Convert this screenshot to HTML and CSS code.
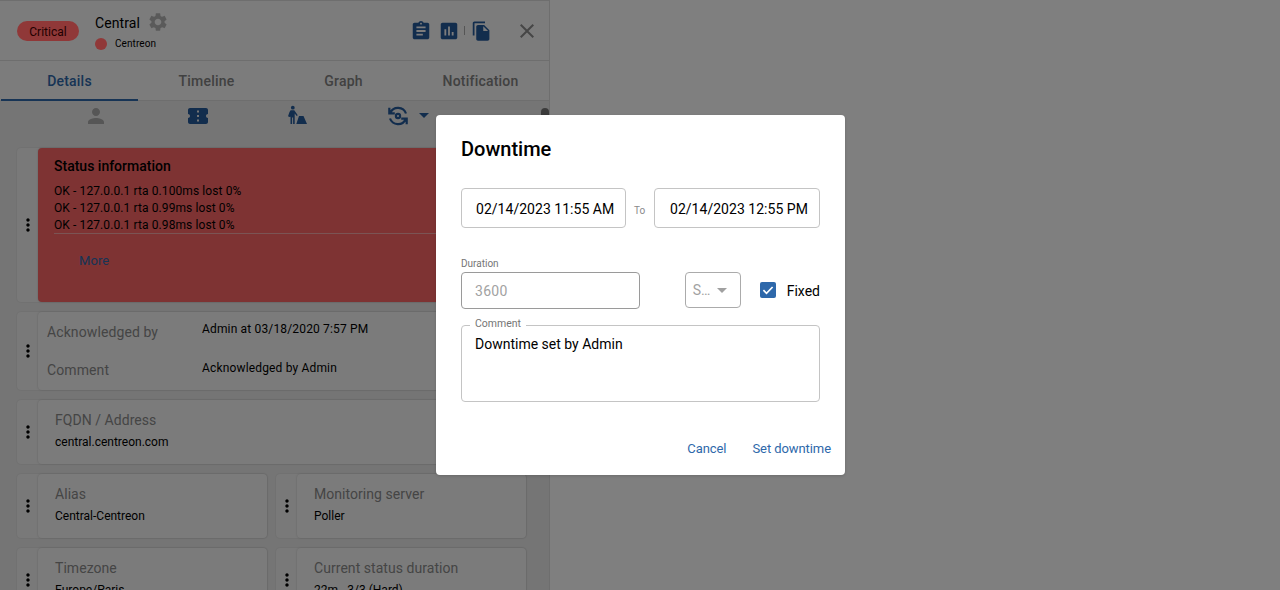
FILE: index.html
```html
<!DOCTYPE html>
<html>
<head>
<meta charset="utf-8">
<title>Downtime</title>
<link rel="stylesheet" href="styles.css">
</head>
<body>

<svg class="defs" width="0" height="0">
  <symbol id="dots" viewBox="0 0 24 24"><path d="M12 8c1.1 0 2-.9 2-2s-.9-2-2-2-2 .9-2 2 .9 2 2 2zm0 2c-1.1 0-2 .9-2 2s.9 2 2 2 2-.9 2-2-.9-2-2-2zm0 6c-1.1 0-2 .9-2 2s.9 2 2 2 2-.9 2-2-.9-2-2-2z"/></symbol>
</svg>

<div class="panel">
  <div class="head">
    <span class="chip">Critical</span>
    <div class="head-name">
      <div class="name-row">
        <span class="name">Central</span>
        <svg class="gear" viewBox="0 0 24 24"><path d="M19.14 12.94c.04-.3.06-.61.06-.94 0-.32-.02-.64-.07-.94l2.03-1.58c.18-.14.23-.41.12-.61l-1.92-3.32c-.12-.22-.37-.29-.59-.22l-2.39.96c-.5-.38-1.03-.7-1.62-.94l-.36-2.54c-.04-.24-.24-.41-.48-.41h-3.84c-.24 0-.43.17-.47.41l-.36 2.54c-.59.24-1.13.57-1.62.94l-2.39-.96c-.22-.08-.47 0-.59.22L2.74 8.87c-.12.21-.08.47.12.61l2.03 1.58c-.05.3-.09.63-.09.94s.02.64.07.94l-2.03 1.58c-.18.14-.23.41-.12.61l1.92 3.32c.12.22.37.29.59.22l2.39-.96c.5.38 1.03.7 1.62.94l.36 2.54c.05.24.24.41.48.41h3.84c.24 0 .44-.17.47-.41l.36-2.54c.59-.24 1.13-.56 1.62-.94l2.39.96c.22.08.47 0 .59-.22l1.92-3.32c.12-.22.07-.47-.12-.61l-2.01-1.58zM12 15.6c-1.98 0-3.6-1.62-3.6-3.6s1.62-3.6 3.6-3.6 3.6 1.62 3.6 3.6-1.62 3.6-3.6 3.6z"/></svg>
      </div>
      <div class="parent-row">
        <span class="dot"></span>
        <span class="parent">Centreon</span>
      </div>
    </div>
    <div class="head-icons">
      <svg class="ico blue" viewBox="0 0 24 24"><path d="M19 3h-4.18C14.4 1.84 13.3 1 12 1c-1.3 0-2.4.84-2.82 2H5c-1.1 0-2 .9-2 2v14c0 1.1.9 2 2 2h14c1.1 0 2-.9 2-2V5c0-1.1-.9-2-2-2zm-7 0c.55 0 1 .45 1 1s-.45 1-1 1-1-.45-1-1 .45-1 1-1zm2 14H7v-2h7v2zm3-4H7v-2h10v2zm0-4H7V7h10v2z"/></svg>
      <svg class="ico blue chart" viewBox="0 0 24 24"><path d="M19 3H5c-1.1 0-2 .9-2 2v14c0 1.1.9 2 2 2h14c1.1 0 2-.9 2-2V5c0-1.1-.9-2-2-2zM9 17H7v-7h2v7zm4 0h-2V7h2v10zm4 0h-2v-4h2v4z"/></svg>
      <span class="sep"></span>
      <svg class="ico blue copy" viewBox="0 0 24 24"><path d="M16 1H4c-1.1 0-2 .9-2 2v14h2V3h12V1zm-1 4l6 6v10c0 1.1-.9 2-2 2H7.99C6.89 23 6 22.1 6 21l.01-14c0-1.1.89-2 1.99-2h7zm-1 7h5.5L14 6.5V12z"/></svg>
      <svg class="ico close" viewBox="0 0 24 24"><path d="M19 6.41L17.59 5 12 10.59 6.41 5 5 6.41 10.59 12 5 17.59 6.41 19 12 13.41 17.59 19 19 17.59 13.41 12z"/></svg>
    </div>
  </div>

  <div class="tabs">
    <div class="tab active">Details</div>
    <div class="tab">Timeline</div>
    <div class="tab">Graph</div>
    <div class="tab">Notification</div>
  </div>

  <div class="body">
    <div class="actions">
      <svg class="ico grey" viewBox="0 0 24 24"><path d="M12 12c2.21 0 4-1.79 4-4s-1.79-4-4-4-4 1.79-4 4 1.79 4 4 4zm0 2c-2.67 0-8 1.34-8 4v2h16v-2c0-2.66-5.33-4-8-4z"/></svg>
      <svg class="ico blue" viewBox="0 0 24 24"><path d="M22 10V6c0-1.11-.9-2-2-2H4c-1.1 0-1.99.89-1.99 2v4c1.1 0 1.99.9 1.99 2s-.89 2-2 2v4c0 1.1.9 2 2 2h16c1.1 0 2-.9 2-2v-4c-1.1 0-2-.9-2-2s.9-2 2-2zm-9 7.5h-2v-2h2v2zm0-4.500h-2v-2h2v2zm0-4.500h-2v-2h2v2z"/></svg>
      <svg class="ico blue" viewBox="0 0 24 24"><circle cx="4.800" cy="3.700" r="1.900"/><path d="M2.600 6.300h3.700l3.500 5-1.100.8-2-2.600V20H5.100v-6.500h-1V20H2.500v-7.200L1.500 13 0 12.300 1.500 8zM11 12h4.500l3.500 8H8.300z"/></svg>
      <div class="sync">
        <svg class="ico sync-ico" viewBox="0 0 24 24"><path d="M4.300 8.800A8.500 8.500 0 0 1 20 9.500M19.700 15.200A8.500 8.500 0 0 1 4 14.500M3.300 3.800v5.500h5.500M20.700 20.200v-5.500h-5.500"/><circle cx="12" cy="12" r="2.100"/></svg>
        <span class="caret blue-caret"></span>
      </div>
    </div>

    <div class="card">
      <div class="handle"><svg class="more"><use href="#dots"/></svg></div>
      <div class="inner status">
        <div class="status-title">Status information</div>
        <div class="status-lines">
          <div>OK - 127.0.0.1 rta 0.100ms lost 0%</div>
          <div>OK - 127.0.0.1 rta 0.99ms lost 0%</div>
          <div>OK - 127.0.0.1 rta 0.98ms lost 0%</div>
        </div>
        <div class="status-more">More</div>
      </div>
    </div>

    <div class="card">
      <div class="handle"><svg class="more"><use href="#dots"/></svg></div>
      <div class="inner ack">
        <div class="ack-label">Acknowledged by</div>
        <div class="ack-value">Admin at 03/18/2020 7:57 PM</div>
        <div class="ack-label">Comment</div>
        <div class="ack-value">Acknowledged by Admin</div>
      </div>
    </div>

    <div class="card">
      <div class="handle"><svg class="more"><use href="#dots"/></svg></div>
      <div class="inner field">
        <div class="field-label">FQDN / Address</div>
        <div class="field-value">central.centreon.com</div>
      </div>
    </div>

    <div class="grid">
      <div class="card">
        <div class="handle"><svg class="more"><use href="#dots"/></svg></div>
        <div class="inner field">
          <div class="field-label">Alias</div>
          <div class="field-value">Central-Centreon</div>
        </div>
      </div>
      <div class="card">
        <div class="handle"><svg class="more"><use href="#dots"/></svg></div>
        <div class="inner field">
          <div class="field-label">Monitoring server</div>
          <div class="field-value">Poller</div>
        </div>
      </div>
      <div class="card">
        <div class="handle"><svg class="more"><use href="#dots"/></svg></div>
        <div class="inner field">
          <div class="field-label">Timezone</div>
          <div class="field-value">Europe/Paris</div>
        </div>
      </div>
      <div class="card">
        <div class="handle"><svg class="more"><use href="#dots"/></svg></div>
        <div class="inner field">
          <div class="field-label">Current status duration</div>
          <div class="field-value">22m - 3/3 (Hard)</div>
        </div>
      </div>
    </div>
  </div>
  <div class="thumb"></div>
</div>

<div class="overlay">
  <div class="dialog">
    <h2 class="title">Downtime</h2>

    <div class="dates">
      <div class="date">02/14/2023 11:55 AM</div>
      <span class="to">To</span>
      <div class="date">02/14/2023 12:55 PM</div>
    </div>

    <div class="duration-row">
      <div class="duration">
        <div class="small-label">Duration</div>
        <div class="duration-box">3600</div>
      </div>
      <div class="select">
        <span>S…</span>
        <span class="caret"></span>
      </div>
      <div class="fixed">
        <span class="check">
          <svg viewBox="0 0 16 16"><path d="M3.400 8.200l3.100 3.100 6.100-6.300" fill="none" stroke="#fff" stroke-width="1.700"/></svg>
        </span>
        <span class="fixed-text">Fixed</span>
      </div>
    </div>

    <div class="comment">
      <span class="comment-label">Comment</span>
      Downtime set by Admin
    </div>

    <div class="buttons">
      <span class="btn">Cancel</span>
      <span class="btn">Set downtime</span>
    </div>
  </div>
</div>

</body>
</html>
```

FILE: styles.css
```css
*{box-sizing:border-box;}
html,body{height:100%;}
body{margin:0;background:#fff;font-family:Roboto,"Liberation Sans",sans-serif;color:#000;overflow:hidden;}
.defs{display:block;height:0;}

.panel{position:relative;width:550px;height:590px;overflow:hidden;background:#ebebeb;border-right:1px solid #ddd;border-top:1px solid #ddd;}

.head{display:flex;align-items:center;height:60px;background:#f8f8f8;border-bottom:1px solid #ddd;padding-left:17px;}
/* the chip and the dot stay brighter than the dimmed page, so they sit above the overlay */
.chip{position:relative;z-index:1;width:62px;height:20px;margin-top:1px;border-radius:10px;background:#903838;font-size:12px;line-height:22px;text-align:center;color:#200;}
.head-name{margin-left:16px;margin-top:1px;}
.name-row{display:flex;align-items:center;height:24px;}
.name{font-size:14px;letter-spacing:.1px;}
.gear{width:22px;height:22px;margin-left:7px;margin-top:-3px;fill:#b5b5b5;}
.parent-row{display:flex;align-items:center;height:14px;margin-top:2px;}
.dot{position:relative;z-index:1;width:12px;height:12px;border-radius:50%;background:#903838;}
.parent{font-size:10px;line-height:12px;margin:-1px 0 0 8px;letter-spacing:.08px;}

.head-icons{display:flex;align-items:center;margin-left:auto;padding-right:10px;}
.ico{width:22px;height:22px;display:block;}
.blue{fill:#255a9b;}
.grey{fill:#acacac;}
.chart{margin-left:6px;}
.sep{width:1px;height:9px;background:#aaa;margin:0 6px 0 4px;}
.copy{width:21px;height:24px;}
.close{fill:#8c8c8c;width:24px;height:24px;margin-left:23px;}

.tabs{display:flex;height:40px;background:#f8f8f8;border-bottom:1px solid #ddd;padding-left:1px;}
.tab{position:relative;width:137px;height:40px;font-size:14px;font-weight:500;letter-spacing:.2px;line-height:40px;text-align:center;color:#828282;}
.tab.active{color:#2e68aa;border-bottom:2px solid #2e68aa;}

.body{padding:0 24px 0 17px;}
.actions{display:flex;height:47px;padding:3px 0 0 67px;}
.actions .ico{width:24px;height:24px;margin-right:78px;}
.sync{position:relative;display:flex;margin-left:-4px;}
.actions .sync-ico{margin:0;fill:none;stroke:#255a9b;stroke-width:2.200;}
.caret{width:0;height:0;border-left:5px solid transparent;border-right:5px solid transparent;border-top:5px solid #8a8a8a;}
.blue-caret{border-top-color:#255a9b;margin:9px 0 0 9px;}

.card{display:flex;margin-bottom:10px;background:#f2f2f2;border-radius:4px;box-shadow:0 0 2px rgba(0,0,0,.12);}
.handle{display:flex;align-items:center;justify-content:center;width:21px;flex:none;}
.more{width:20px;height:20px;fill:#000;}
.inner{flex:1;border-radius:4px;background:#f7f7f7;box-shadow:0 0 2px rgba(0,0,0,.2);}

.status{height:154px;padding:10px 16px;background:#fd6666;}
.status-title{font-size:14px;font-weight:500;line-height:17px;}
.status-lines{margin-top:8px;font-size:12px;line-height:17px;letter-spacing:.1px;height:51px;border-bottom:1px solid #f7a9a9;}
.status-more{margin:19px 0 0 25px;font-size:13px;letter-spacing:.1px;line-height:16px;color:#2e68aa;}

.ack{display:grid;grid-template-columns:155px 1fr;grid-template-rows:38px 40px;height:78px;padding-left:9px;}
.ack-label{font-size:14px;letter-spacing:.1px;padding-top:12px;color:#8a8a8a;}
.ack-value{font-size:12px;letter-spacing:.16px;line-height:16px;padding-top:9px;}
.ack-value:last-child{padding-top:10px;}

.field{height:64px;padding:11px 17px;}
.field-label{font-size:14px;letter-spacing:.05px;line-height:18px;color:#8a8a8a;}
.field-value{font-size:12px;line-height:16px;margin-top:5px;}

.grid{display:grid;grid-template-columns:250px 250px;column-gap:9px;}
.grid .card{height:64px;}

.thumb{position:absolute;top:107px;right:0;width:8px;height:60px;border-radius:4px;background:#777;}

.overlay{position:absolute;top:0;left:0;width:100%;height:100%;display:flex;align-items:center;justify-content:center;padding-left:1px;background:rgba(0,0,0,.5);}
.dialog{width:409px;height:360px;padding:22px 25px 0;border-radius:4px;background:#fff;box-shadow:0 1px 3px rgba(0,0,0,.15);}
.title{margin:0;font-size:20px;font-weight:500;line-height:24px;}

.dates{display:flex;align-items:center;margin-top:27px;}
.date{width:165px;height:40px;border:1px solid #c4c4c4;border-radius:4px;font-size:14px;letter-spacing:.03px;line-height:40px;padding-left:14px;white-space:nowrap;}
.to{width:28px;padding:4px 0 0 8px;font-size:10px;color:#8a8a8a;}
.dates .date:last-child{width:166px;padding-left:15px;}

.duration-row{display:flex;align-items:flex-end;margin-top:29px;}
.duration{width:179px;}
.small-label{font-size:10px;line-height:14px;margin-bottom:1px;color:#757575;}
.duration-box{height:37px;border:1px solid #9a9a9a;border-radius:4px;font-size:14px;line-height:37px;padding-left:13px;color:#a2a2a2;letter-spacing:.3px;}
.select{display:flex;align-items:center;width:56px;height:36px;margin:0 0 1px 45px;border:1px solid #ababab;border-radius:4px;padding-left:7px;font-size:14px;line-height:18px;color:#a2a2a2;}
.select .caret{border-top-color:#a0a0a0;margin-left:7px;}
.fixed{display:flex;align-items:center;height:36px;margin:0 0 1px 19px;font-size:14px;}
.fixed-text{padding-top:2px;}
.check{width:16px;height:16px;margin-right:11px;border-radius:2px;background:#2e68aa;}
.check svg{display:block;width:16px;height:16px;}

.comment{position:relative;height:77px;margin-top:16px;border:1px solid #c4c4c4;border-radius:4px;padding:9px 13px;font-size:14px;line-height:18px;}
.comment-label{position:absolute;top:-9px;left:8px;padding:0 5px;background:#fff;font-size:10.500px;line-height:14px;color:#757575;}

.buttons{display:flex;justify-content:flex-end;gap:26px;margin:39px -11px 0 0;}
.btn{font-size:13px;letter-spacing:-.08px;line-height:16px;color:#2e68aa;}
```
